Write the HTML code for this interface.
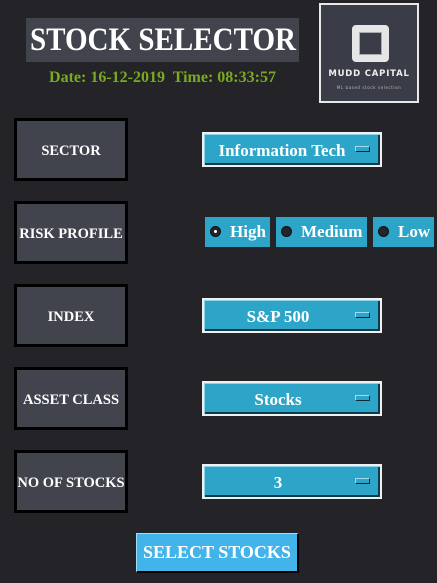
<!DOCTYPE html>
<html><head><meta charset="utf-8"><style>
*{margin:0;padding:0;box-sizing:border-box}
body{width:437px;height:583px;background:#232328;position:relative;overflow:hidden;font-family:"Liberation Serif",serif;font-weight:bold;color:#fff}
.a{position:absolute;white-space:nowrap}
.title{left:26px;top:18px;width:273px;height:44px;background:#41434d;}
.title span{position:absolute;left:-63px;width:400px;top:0;text-align:center;font-size:33px;line-height:45px;transform:scaleX(0.88);transform-origin:center}
.date{left:0;width:325px;top:69px;text-align:center;color:#7aaa1f;font-size:16px}
.logo{left:319px;top:3px;width:100px;height:100px;border:2px solid #e8e8e8;background:#3a3c47}
.sq{left:31px;top:20px;width:37px;height:37px;border:7px solid #e6e6e6;border-radius:4px;background:#3a3c47;box-shadow:inset 0 0 0 1px #aaa}
.mc{left:0;width:96px;top:64px;text-align:center;font-family:"DejaVu Sans",sans-serif;font-size:8.5px;letter-spacing:0.8px;color:#eee}
.ml{left:0;width:96px;top:80px;text-align:center;font-family:"DejaVu Sans",sans-serif;font-size:4px;letter-spacing:0.6px;color:#bbb;font-weight:normal}
.lab{left:14px;width:114px;height:63px;background:#41434d;border:3px solid #000;font-size:14.5px;display:flex;align-items:center;justify-content:center;padding-top:3px}
.dd{left:202px;width:180px;height:35px;border:2px solid #f0f0f0;background:#2ca5c9;box-shadow:inset 1px 1px 0 #8fd3ea, inset -2px -2px 0 #0a3c4c;font-size:17px;line-height:33px;padding-right:28px;text-align:center}
.dd i{position:absolute;right:10px;top:12px;width:15px;height:6px;background:#2ca5c9;border:1px solid #9fdcf0;border-right-color:#0a2a35;border-bottom-color:#0a2a35}
.rb{top:217px;height:30px;background:#2ca5c9;font-size:17px;line-height:30px;padding-left:25px}
.rb b{position:absolute;left:5px;top:9px;width:11px;height:11px;border-radius:50%;background:#22252b;border:1px solid #111}
.rb b.on::after{content:"";position:absolute;left:3px;top:3px;width:3px;height:3px;background:#fff;border-radius:50%}
.btn{left:136px;top:533px;width:163px;height:40px;background:#42b4ea;border:1px solid #9fe0f8;border-right:2px solid #000;border-bottom:2px solid #000;font-size:18px;line-height:37px;text-align:center}
</style></head><body>
<div class="a title"><span>STOCK SELECTOR</span></div>
<div class="a date">Date: 16-12-2019&nbsp; Time: 08:33:57</div>
<div class="a logo"><div class="a sq"></div><div class="a mc">MUDD CAPITAL</div><div class="a ml">ML based stock selection</div></div>

<div class="a lab" style="top:118px">SECTOR</div>
<div class="a lab" style="top:201px">RISK PROFILE</div>
<div class="a lab" style="top:284px">INDEX</div>
<div class="a lab" style="top:367px">ASSET CLASS</div>
<div class="a lab" style="top:450px">NO OF STOCKS</div>

<div class="a dd" style="top:132px;padding-left:4px;padding-right:24px">Information Tech<i></i></div>
<div class="a rb" style="left:205px;width:65px"><b class="on"></b>High</div>
<div class="a rb" style="left:276px;width:91px"><b></b>Medium</div>
<div class="a rb" style="left:373px;width:61px"><b></b>Low</div>
<div class="a dd" style="top:298px">S&amp;P 500<i></i></div>
<div class="a dd" style="top:381px">Stocks<i></i></div>
<div class="a dd" style="top:464px">3<i></i></div>

<div class="a btn">SELECT STOCKS</div>
</body></html>
